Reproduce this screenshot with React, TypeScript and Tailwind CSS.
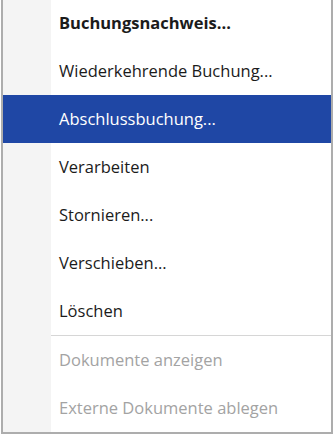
import { clsx } from 'clsx'

type Item = {
  label: string
  bold?: boolean
  active?: boolean
  disabled?: boolean
}

const before: Item[] = [
  { label: 'Buchungsnachweis...', bold: true },
  { label: 'Wiederkehrende Buchung...' },
  { label: 'Abschlussbuchung...', active: true },
  { label: 'Verarbeiten' },
  { label: 'Stornieren...' },
  { label: 'Verschieben...' },
  { label: 'Löschen' },
]

const after: Item[] = [
  { label: 'Dokumente anzeigen', disabled: true },
  { label: 'Externe Dokumente ablegen', disabled: true },
]

function MenuRow({ item, first }: { item: Item; first?: boolean }) {
  return (
    <div
      className={clsx(
        'flex items-stretch',
        first ? 'h-[47px]' : 'h-[48px]',
        item.active && 'bg-[#1f47a5]',
      )}
    >
      <div className={clsx('w-[48px] flex-none', !item.active && 'bg-[#f4f4f4]')} />
      <span
        className={clsx(
          'flex items-center pl-2 text-[16.5px]',
          item.bold && 'font-bold',
          item.active ? 'text-white' : item.disabled ? 'text-[#a3a3a3]' : 'text-[#1b1b1b]',
        )}
      >
        {item.label}
      </span>
    </div>
  )
}

export default function App() {
  return (
    <div
      className="h-[447px] w-[336px] bg-white"
      style={{ fontFamily: '"Open Sans", "Noto Sans", sans-serif' }}
    >
      <div className="ml-px w-[332px] border-x-2 border-b-2 border-[#adadad] bg-white">
        {before.map((item, i) => (
          <MenuRow key={item.label} item={item} first={i === 0} />
        ))}
        <div className="flex h-px">
          <div className="w-[48px] flex-none bg-[#f4f4f4]" />
          <div className="flex-1 bg-[#d6d6d6]" />
        </div>
        {after.map((item) => (
          <MenuRow key={item.label} item={item} />
        ))}
      </div>
    </div>
  )
}
